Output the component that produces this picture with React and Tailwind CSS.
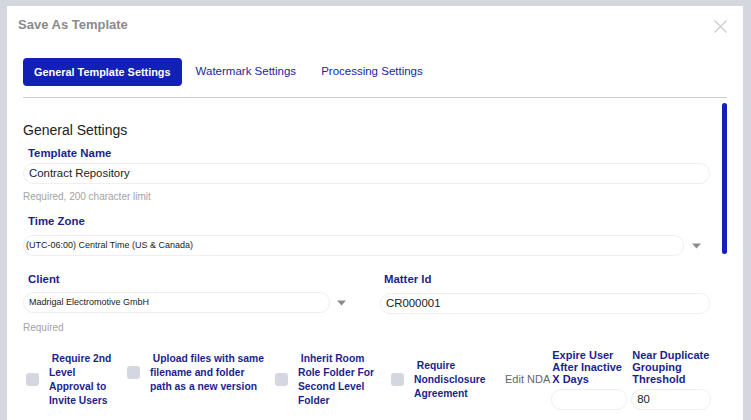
const labelCls = "font-bold text-[#1b1f8e]";
const inputCls = "h-[21px] rounded-[10px] border border-[#efefef] bg-white px-[5px] flex items-center text-[#222]";

function Arrow() {
  return (
    <svg width="9" height="6" viewBox="0 0 9 6" className="shrink-0">
      <path d="M0 0.5h9L4.5 5.5z" fill="#8c8c8c" />
    </svg>
  );
}

function Check({ label, width, className = "" }) {
  return (
    <div className={`flex shrink-0 items-center ${className}`}>
      <span className="h-[13px] w-[13px] shrink-0 rounded-[3px] bg-[#d4d7e0]" />
      <span className={`ml-[10px] shrink-0 text-[10.3px] leading-[14px] ${labelCls}`} style={{ width }}>
        {"\u00a0" + label}
      </span>
    </div>
  );
}

export default function App() {
  return (
    <div className="h-[420px] w-[751px] overflow-hidden bg-[#d4d7e0] pl-[7px] pr-[8px] pt-[6px] font-['Liberation_Sans',Arial,sans-serif]">
      <div className="relative h-full bg-white">
        <div className="flex items-center justify-between pl-[11px] pr-[16px] pt-[9px]">
          <h2 className="text-[13px] font-bold leading-[20px] text-[#8a8a8a]">Save As Template</h2>
          <svg width="13" height="13" viewBox="0 0 13 13" className="mt-[2px]">
            <path d="M0.5 0.5l12 12M12.5 0.5l-12 12" stroke="#c9c9c9" strokeWidth="1.1" />
          </svg>
        </div>

        <div className="ml-[16px] mr-[16px] mt-[23px]">
          <div className="flex items-center text-[11.5px]">
            <button className="h-[28px] rounded-[4px] bg-[#1120b6] px-[11px] text-[10.9px] font-bold text-white">
              General Template Settings
            </button>
            <span className="ml-[14px] text-[#1b1fa0]">Watermark Settings</span>
            <span className="ml-[25px] text-[#1b1fa0]">Processing Settings</span>
          </div>
          <div className="mt-[11px] h-px bg-[#cfcfcf]" />

          <div className="relative pt-[24px]">
            <div className="absolute right-[0px] top-[5px] h-[151px] w-[5px] rounded-[3px] bg-[#1120b6]" />
            <div className="pr-[17px]">
              <h3 className="text-[14px] leading-[16px] text-[#222]">General Settings</h3>
              <div className={`mt-[8px] pl-[5px] text-[11.4px] leading-[14px] ${labelCls}`}>Template Name</div>
              <div className={`mt-[3px] text-[11.4px] ${inputCls}`}>Contract Repository</div>
              <div className="mt-[7px] text-[10px] leading-[12px] text-[#a3a3a3]">Required, 200 character limit</div>

              <div className={`mt-[11px] pl-[5px] text-[11.4px] leading-[14px] ${labelCls}`}>Time Zone</div>
              <div className="mt-[7px] flex items-center">
                <div className={`flex-1 text-[9px] ${inputCls} pl-[2px]`}>(UTC-06:00) Central Time (US &amp; Canada)</div>
                <div className="ml-[8px] mr-[9px]"><Arrow /></div>
              </div>

              <div className="mt-[16px] flex">
                <div className="w-[339px]">
                  <div className={`pl-[5px] text-[11.4px] leading-[14px] ${labelCls}`}>Client</div>
                  <div className="mt-[6px] flex items-center">
                    <div className={`w-[307px] text-[9px] ${inputCls}`}>Madrigal Electromotive GmbH</div>
                    <div className="ml-[7px]"><Arrow /></div>
                  </div>
                  <div className="mt-[9px] text-[10px] leading-[12px] text-[#a3a3a3]">Required</div>
                </div>
                <div className="ml-[18px] flex-1">
                  <div className={`pl-[4px] text-[11.4px] leading-[14px] ${labelCls}`}>Matter Id</div>
                  <div className={`mt-[7px] text-[11.4px] ${inputCls}`}>CR000001</div>
                </div>
              </div>

              <div className="mt-[15px] flex items-center pl-[3px]">
                <Check label="Require 2nd Level Approval to Invite Users" width={64} />
                <Check label="Upload files with same filename and folder path as a new version" width={118} className="ml-[14px] mb-[14px]" />
                <Check label="Inherit Room Role Folder For Second Level Folder" width={78} className="ml-[7px]" />
                <Check label="Require Nondisclosure Agreement" width={76} className="ml-[15px]" />
                <span className="ml-[15px] shrink-0 whitespace-nowrap text-[11px] text-[#666]">Edit NDA</span>
                <div className="ml-[1px] w-[76px] shrink-0">
                  <div className={`pl-[1px] text-[11px] leading-[12px] ${labelCls}`}>Expire User After Inactive X Days</div>
                  <div className={`mt-[4px] text-[11.4px] ${inputCls}`} />
                </div>
                <div className="ml-[4px] w-[80px] shrink-0">
                  <div className={`pl-[1px] text-[11px] leading-[12px] ${labelCls}`}>Near Duplicate Grouping Threshold</div>
                  <div className={`mt-[4px] text-[11.4px] ${inputCls}`}>80</div>
                </div>
              </div>
            </div>
          </div>
        </div>
      </div>
    </div>
  );
}
